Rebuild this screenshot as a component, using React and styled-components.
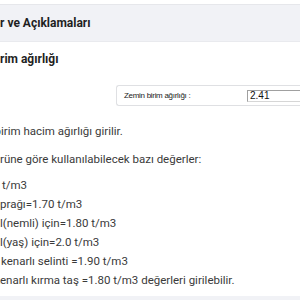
import styled, { createGlobalStyle } from "styled-components";

const GlobalStyle = createGlobalStyle`
  html, body {
    margin: 0;
    padding: 0;
    background: #ffffff;
  }
  body {
    font-family: Roboto, "Liberation Sans", sans-serif;
    color: #333333;
    overflow: hidden;
  }
`;

const Viewport = styled.div`
  width: 300px;
  height: 300px;
  overflow: hidden;
  display: flex;
  flex-direction: column;
`;

const Page = styled.div`
  padding-top: 4px;
  flex: 1;
  display: flex;
  flex-direction: column;
`;

// the window is scrolled sideways: the start of each line lies left of the view
const Clip = styled.span`
  display: inline-flex;
  width: 0;
  justify-content: flex-end;
  white-space: pre;
`;

const Line = styled.div`
  padding-left: ${(p) => p.$indent || 0}px;
  white-space: nowrap;
`;

const SectionBar = styled.div`
  height: 36px;
  display: flex;
  align-items: center;
  background-color: #f1f2f6;
  border-top: 1px solid #e6e7eb;
  border-bottom: 1px solid #e9eaee;
  font-size: 12px;
  font-weight: bold;
  color: #1f1f1f;
`;

const Content = styled.div`
  flex: 1;
  padding-top: 9px;
`;

const SubTitle = styled(Line)`
  font-size: 12px;
  font-weight: bold;
  color: #1f1f1f;
  line-height: 16px;
`;

const FieldBox = styled.div`
  margin: 18px 0 0 116px;
  height: 19px;
  display: flex;
  align-items: center;
  padding-left: 7px;
  border: 1px solid #dfe0e3;
  border-right: none;
  border-radius: 3px 0 0 3px;
`;

const FieldLabel = styled.label`
  flex: none;
  width: 123px;
  font-family: "Liberation Sans", Arial, sans-serif;
  font-size: 8px;
  letter-spacing: -0.3px;
  color: #222222;
`;

const FieldInput = styled.input`
  flex: none;
  box-sizing: border-box;
  width: 90px;
  height: 12px;
  margin: 0;
  padding: 0 2px;
  border: 1px solid #a0a0a0;
  border-right-color: #d6d6d6;
  border-bottom-color: #d6d6d6;
  font-family: "Liberation Sans", Arial, sans-serif;
  font-size: 10px;
  color: #111111;
  outline: none;
`;

const Paragraph = styled.div`
  margin-top: ${(p) => p.$top}px;
  font-size: 11.5px;
  line-height: 19px;
  color: #3a3a3a;
`;

const Footer = styled.div`
  height: 4px;
  background-color: #f1f2f6;
`;

const values = [
  { cut: "Kil =2.00 ", text: "t/m3", indent: 2 },
  { cut: "Bitkisel to", text: "prağı=1.70 t/m3", indent: 0 },
  { cut: "Kum-çakı", text: "l(nemli) için=1.80 t/m3", indent: 0 },
  { cut: "Kum-çakı", text: "l(yaş) için=2.0 t/m3", indent: 0 },
  { cut: "Yuvarlak ", text: "kenarlı selinti =1.90 t/m3", indent: 1 },
  { cut: "Köşeli k", text: "enarlı kırma taş =1.80 t/m3 değerleri girilebilir.", indent: 0 },
];

export default function App() {
  return (
    <>
      <GlobalStyle />
      <Viewport>
        <Page>
          <SectionBar>
            <Line>
              <Clip>Parametrele</Clip>r ve Açıklamaları
            </Line>
          </SectionBar>
          <Content>
            <SubTitle>
              <Clip>Zemin bi</Clip>rim ağırlığı
            </SubTitle>
            <FieldBox>
              <FieldLabel htmlFor="zemin">Zemin birim ağırlığı :</FieldLabel>
              <FieldInput id="zemin" defaultValue="2.41" />
            </FieldBox>
            <Paragraph $top={16}>
              <Line $indent={1}>
                <Clip>Zemin b</Clip>irim hacim ağırlığı girilir.
              </Line>
            </Paragraph>
            <Paragraph $top={9}>
              <Line>
                <Clip>Zemin tü</Clip>rüne göre kullanılabilecek bazı değerler:
              </Line>
            </Paragraph>
            <Paragraph $top={7}>
              {values.map((v) => (
                <Line key={v.text} $indent={v.indent}>
                  <Clip>{v.cut}</Clip>
                  {v.text}
                </Line>
              ))}
            </Paragraph>
          </Content>
        </Page>
        <Footer />
      </Viewport>
    </>
  );
}
